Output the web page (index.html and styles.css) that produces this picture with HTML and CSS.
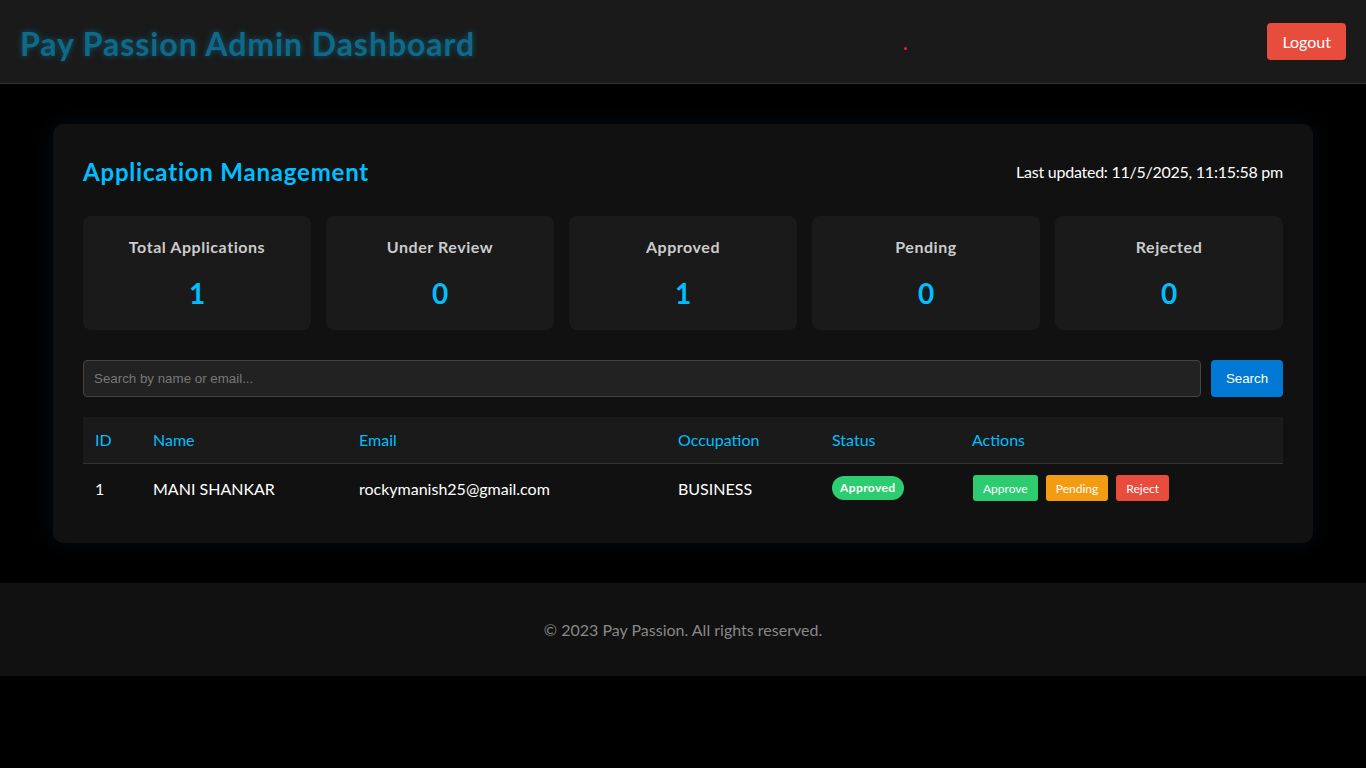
FILE: index.html
```html
<!DOCTYPE html>
<html lang="en">
<head>
<meta charset="utf-8">
<title>Pay Passion Admin Dashboard</title>
<link rel="stylesheet" href="styles.css">
</head>
<body>
<header class="topbar">
  <h1 class="brand">Pay Passion Admin Dashboard</h1>
  <span class="dot"></span>
  <button class="logout">Logout</button>
</header>
<main class="page">
  <section class="panel">
    <div class="panel-head">
      <h2 class="panel-title">Application Management</h2>
      <span class="updated">Last updated: 11/5/2025, 11:15:58 pm</span>
    </div>
    <div class="stats">
      <div class="stat"><div class="stat-label">Total Applications</div><div class="stat-value">1</div></div>
      <div class="stat"><div class="stat-label">Under Review</div><div class="stat-value">0</div></div>
      <div class="stat"><div class="stat-label">Approved</div><div class="stat-value">1</div></div>
      <div class="stat"><div class="stat-label">Pending</div><div class="stat-value">0</div></div>
      <div class="stat"><div class="stat-label">Rejected</div><div class="stat-value">0</div></div>
    </div>
    <div class="search">
      <input class="search-input" type="text" placeholder="Search by name or email...">
      <button class="search-btn">Search</button>
    </div>
    <table class="apps">
      <thead>
        <tr>
          <th class="c-id">ID</th>
          <th class="c-name">Name</th>
          <th class="c-email">Email</th>
          <th class="c-occ">Occupation</th>
          <th class="c-status">Status</th>
          <th class="c-actions">Actions</th>
        </tr>
      </thead>
      <tbody>
        <tr>
          <td>1</td>
          <td>MANI SHANKAR</td>
          <td>rockymanish25@gmail.com</td>
          <td>BUSINESS</td>
          <td><span class="badge">Approved</span></td>
          <td class="actions">
            <button class="act act-approve">Approve</button>
            <button class="act act-pending">Pending</button>
            <button class="act act-reject">Reject</button>
          </td>
        </tr>
      </tbody>
    </table>
  </section>
</main>
<footer class="footer">© 2023 Pay Passion. All rights reserved.</footer>
</body>
</html>
```
FILE: styles.css
```css
* { box-sizing: border-box; }
html, body { margin: 0; padding: 0; }
body {
  background: #000;
  color: #fff;
  font-family: Lato, "Open Sans", sans-serif;
  font-size: 16px;
}
.topbar {
  position: relative;
  height: 84px;
  background: #1a1a1a;
  border-bottom: 1px solid #333;
  display: flex;
  align-items: center;
  justify-content: space-between;
  padding: 0 20px;
}
.brand {
  margin: 0;
  padding-top: 4px;
  font-size: 32px;
  font-weight: 700;
  letter-spacing: 0.95px;
  color: #0f6a89;
  text-shadow: 0 0 6px rgba(0, 191, 255, 0.35);
}
.dot {
  position: absolute;
  left: 904px;
  top: 47px;
  width: 3px;
  height: 3px;
  border-radius: 50%;
  background: #ff1a1a;
}
.logout {
  background: #e74c3c;
  color: #fff;
  border: none;
  border-radius: 4px;
  height: 37px;
  padding: 0 15px;
  font-family: inherit;
  font-size: 16px;
}
.page {
  padding: 40px 53px;
}
.panel {
  max-width: 1260px;
  margin: 0 auto;
  background: #111;
  border-radius: 10px;
  padding: 30px;
  box-shadow: 0 0 20px rgba(0, 191, 255, 0.08);
}
.panel-head {
  display: flex;
  justify-content: space-between;
  align-items: center;
  height: 36px;
  margin-bottom: 26px;
}
.panel-title {
  margin: 0;
  font-size: 24px;
  font-weight: 700;
  letter-spacing: 0.8px;
  color: #00bfff;
  position: relative;
  top: -1px;
}
.updated {
  font-size: 16px;
  letter-spacing: -0.25px;
  color: #fff;
  position: relative;
  top: -1px;
}
.stats {
  display: grid;
  grid-template-columns: repeat(5, 1fr);
  gap: 15px;
  margin-bottom: 30px;
}
.stat {
  background: #1a1a1a;
  border-radius: 8px;
  height: 114px;
  padding: 20px 10px;
  text-align: center;
}
.stat-label {
  font-weight: 700;
  color: #ccc;
  font-size: 16px;
  letter-spacing: 0.55px;
  line-height: 22px;
}
.stat-value {
  margin-top: 18px;
  font-size: 28px;
  font-weight: 700;
  color: #00bfff;
  line-height: 34px;
}
.search {
  display: flex;
  gap: 10px;
  margin-bottom: 20px;
}
.search-input {
  flex: 1;
  height: 37px;
  background: #222;
  border: 1px solid #444;
  border-radius: 4px;
  color: #fff;
  padding: 0 10px;
  font-family: "Liberation Sans", Arial, sans-serif;
  font-size: 13.33px;
}
.search-input::placeholder { color: #777; }
.search-btn {
  width: 72px;
  height: 37px;
  background: #0078d4;
  color: #fff;
  border: none;
  border-radius: 4px;
  font-family: "Liberation Sans", Arial, sans-serif;
  font-size: 13.33px;
}
.apps {
  width: 100%;
  border-collapse: collapse;
  table-layout: fixed;
}
.apps th {
  background: #1a1a1a;
  color: #00bfff;
  font-weight: 400;
  text-align: left;
  height: 46px;
  padding: 0 12px;
  border-bottom: 1px solid #333;
}
.apps td {
  text-align: left;
  height: 50px;
  padding: 0 12px;
  color: #fff;
}
.c-id { width: 58px; }
.c-name { width: 206px; }
.c-email { width: 319px; }
.c-occ { width: 154px; }
.c-status { width: 140px; }
.badge {
  display: inline-block;
  background: #2ecc71;
  color: #fff;
  font-weight: 700;
  font-size: 12px;
  letter-spacing: 0.4px;
  line-height: 16px;
  padding: 4px 8px;
  border-radius: 12px;
}
.actions { white-space: nowrap; padding-left: 13px !important; }
.act {
  border: none;
  border-radius: 3px;
  color: #fff;
  font-family: inherit;
  font-size: 12px;
  height: 26px;
  padding: 0 10px;
  margin-right: 4px;
}
.act-approve { background: #2ecc71; }
.act-pending { background: #f39c12; padding: 0 10px; }
.act-reject { background: #e74c3c; }
.footer {
  background: #111;
  height: 93px;
  display: flex;
  align-items: center;
  justify-content: center;
  color: #888;
  font-size: 16px;
}
```
